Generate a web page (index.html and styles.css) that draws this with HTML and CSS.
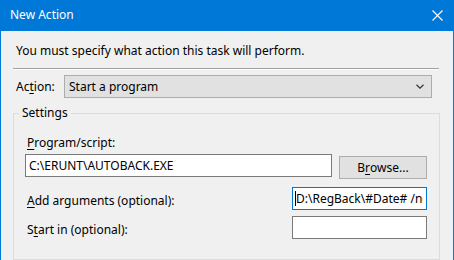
FILE: index.html
```html
<!DOCTYPE html>
<html>
<head>
<meta charset="utf-8">
<link rel="stylesheet" href="styles.css">
</head>
<body>
<div class="window">
  <div class="titlebar">
    <span class="title">New Action</span>
    <svg class="close" width="11" height="11" viewBox="0 0 11 11"><path d="M0.5 0.5 L10.5 10.5 M10.5 0.5 L0.5 10.5" stroke="#fff" stroke-width="1.1" fill="none"/></svg>
  </div>
  <div class="content">
    <p class="intro">You must specify what action this task will perform.</p>
    <div class="sep"></div>
    <div class="action-row">
      <span class="label action-label">Ac<u>t</u>ion:</span>
      <div class="combo">
        <span>Start a program</span>
        <svg width="8" height="5" viewBox="0 0 8 5"><path d="M0.5 0.8 L4 4.2 L7.5 0.8" stroke="#333" stroke-width="1.2" fill="none"/></svg>
      </div>
    </div>
    <fieldset class="group">
      <legend>Settings</legend>
      <div class="label prog-label"><u>P</u>rogram/script:</div>
      <div class="row prog-row">
        <input class="input prog-input" type="text" readonly value="C:\ERUNT\AUTOBACK.EXE">
        <div class="button">B<u>r</u>owse...</div>
      </div>
      <div class="row opt-row args-row">
        <span class="label"><u>A</u>dd arguments (optional):</span>
        <input class="input small focused" type="text" readonly value="D:\RegBack\#Date# /noconfirmdelete /noprogresswindow">
      </div>
      <div class="row opt-row start-row">
        <span class="label">S<u>t</u>art in (optional):</span>
        <input class="input small" type="text" readonly value="">
      </div>
    </fieldset>
  </div>
</div>
</body>
</html>
```
FILE: styles.css
```css
* { box-sizing: border-box; }
html, body { margin: 0; padding: 0; }
body {
  font-family: "Segoe UI", "Noto Sans", "Open Sans", sans-serif;
  font-size: 12px;
  line-height: 16px;
  color: #000;
  background: #f0f0f0;
}
u { text-decoration: underline; text-underline-offset: 2px; }
.window {
  width: 454px;
  height: 260px;
  overflow: hidden;
  background: #f0f0f0;
  border-left: 1px solid #0078d7;
  border-right: 1px solid #0078d7;
}
.titlebar {
  height: 31px;
  background: #0078d7;
  color: #fff;
  display: flex;
  align-items: center;
  padding-left: 9px;
  padding-right: 10px;
}
.title { flex: 1; font-size: 12px; padding-bottom: 1px; }
.close { display: block; margin-bottom: 1px; }
.content {
  padding: 0 13px 0 12px;
}
.intro {
  margin: 12px 0 0 3px;
}
.sep {
  margin-top: 9px;
  height: 2px;
  border-top: 1px solid #a0a0a0;
  border-bottom: 1px solid #fff;
  margin-right: 1px;
}
.action-row {
  display: flex;
  align-items: center;
  margin-top: 5px;
}
.action-label {
  width: 51px;
  padding-left: 3px;
}
.combo {
  width: 368px;
  height: 23px;
  border: 1px solid #adadad;
  background: #e1e1e1;
  display: flex;
  align-items: center;
  justify-content: space-between;
  padding: 0 7px 0 4px;
}
.combo svg { display: block; }
.group {
  margin: 7px 0 0 0;
  padding: 0 11px 20px 11px;
  border: 1px solid #dcdcdc;
  min-width: 0;
}
.group legend {
  padding: 0 3px;
  margin-left: -6px;
}
.prog-label {
  margin-top: 14px;
  padding-left: 2px;
}
.row { display: flex; }
.prog-row {
  margin-top: 3px;
  align-items: flex-start;
}
.input {
  display: block;
  height: 23px;
  margin: 0;
  background: #fff;
  border: 1px solid #7a7a7a;
  padding: 0 3px;
  font: inherit;
  color: #000;
  outline: none;
}
.prog-input { width: 307px; }
.button {
  margin-left: 7px;
  margin-top: 2px;
  width: 88px;
  height: 23px;
  border: 1px solid #adadad;
  background: #e1e1e1;
  display: flex;
  align-items: center;
  justify-content: center;
}
.opt-row {
  justify-content: space-between;
  align-items: flex-end;
  padding-right: 1px;
}
.opt-row .label { padding-left: 2px; margin-bottom: 1px; }
.args-row { margin-top: 8px; }
.start-row { margin-top: 6px; }
.small { width: 135px; padding-left: 3px; }
.focused {
  border-color: #0078d7;
  background: #fff linear-gradient(#000, #000) no-repeat 2px 3px / 1px 15px;
}
```
